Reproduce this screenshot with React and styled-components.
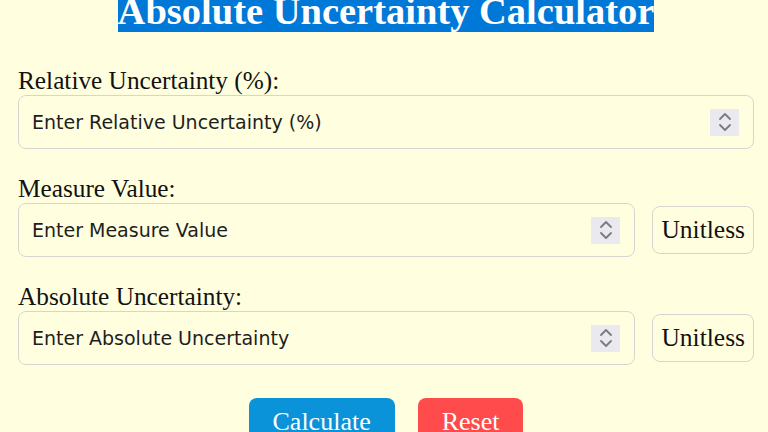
import styled, { createGlobalStyle } from 'styled-components';

const GlobalStyle = createGlobalStyle`
  html, body {
    margin: 0;
    padding: 0;
    background: #ffffe0;
    overflow: hidden;
  }
  body {
    font-family: "Liberation Serif", "Times New Roman", serif;
  }
`

const Page = styled.div`
  width: 768px;
  height: 432px;
  padding: 0 14px 0 18px;
  box-sizing: border-box;
  overflow: hidden;
`
const Title = styled.h1`
  margin: -10px 0 33px 0;
  text-align: center;
  font-size: 38.5px;
  line-height: 43px;
  font-weight: bold;
  span {
    background: #0078d7;
    color: #fff;
  }
`
const Group = styled.div`
  margin-bottom: 25px;
`
const Label = styled.label`
  display: block;
  font-size: 25.3px;
  line-height: 28px;
  color: #111;
  margin-bottom: 1px;
`
const Row = styled.div`
  display: flex;
  align-items: center;
  gap: 17px;
`
const Field = styled.div`
  flex: 1;
  height: 54px;
  box-sizing: border-box;
  display: flex;
  align-items: center;
  padding: 0 14px 0 13px;
  border: 1.5px solid #d6d6d0;
  border-radius: 8px;
`
const Input = styled.input`
  flex: 1;
  border: none;
  outline: none;
  background: transparent;
  font-family: "DejaVu Sans", "Liberation Sans", sans-serif;
  font-size: 19px;
  color: #1e1e1e;
  padding: 0;
  &::placeholder {
    color: #1e1e1e;
    opacity: 1;
  }
`
const Spinner = styled.div`
  width: 29px;
  height: 27px;
  background: #e9e9ef;
  display: flex;
  align-items: center;
  justify-content: center;
`
const UnitButton = styled.button`
  height: 48px;
  padding: 0 8px;
  background: transparent;
  border: 1.5px solid #d6d6d0;
  border-radius: 8px;
  font-family: "Liberation Serif", "Times New Roman", serif;
  font-size: 25.5px;
  color: #111;
`
const Actions = styled.div`
  display: flex;
  justify-content: center;
  gap: 23px;
  margin-top: 33px;
`
const ActionButton = styled.button`
  height: 48px;
  padding: 0 24px;
  border: none;
  border-radius: 8px;
  color: #fff;
  background: ${(p) => p.$color};
  font-family: "Liberation Serif", "Times New Roman", serif;
  font-size: 26px;
`

const Chevrons = () => (
  <svg width="14" height="22" viewBox="0 0 14 22" fill="none" stroke="#7a7a80" strokeWidth="1.8" strokeLinecap="round" strokeLinejoin="round">
    <polyline points="2,8 7,3 12,8" />
    <polyline points="2,14 7,19 12,14" />
  </svg>
)

const NumberField = ({ placeholder }) => (
  <Field>
    <Input placeholder={placeholder} />
    <Spinner><Chevrons /></Spinner>
  </Field>
)

const App = () => {
  return (
    <Page>
      <GlobalStyle />
      <Title><span>Absolute Uncertainty Calculator</span></Title>
      <Group>
        <Label>Relative Uncertainty (%):</Label>
        <Row>
          <NumberField placeholder="Enter Relative Uncertainty (%)" />
        </Row>
      </Group>
      <Group>
        <Label>Measure Value:</Label>
        <Row>
          <NumberField placeholder="Enter Measure Value" />
          <UnitButton>Unitless</UnitButton>
        </Row>
      </Group>
      <Group>
        <Label>Absolute Uncertainty:</Label>
        <Row>
          <NumberField placeholder="Enter Absolute Uncertainty" />
          <UnitButton>Unitless</UnitButton>
        </Row>
      </Group>
      <Actions>
        <ActionButton $color="#0a93d8">Calculate</ActionButton>
        <ActionButton $color="#ff4b4b">Reset</ActionButton>
      </Actions>
    </Page>
  )
}

export default App
